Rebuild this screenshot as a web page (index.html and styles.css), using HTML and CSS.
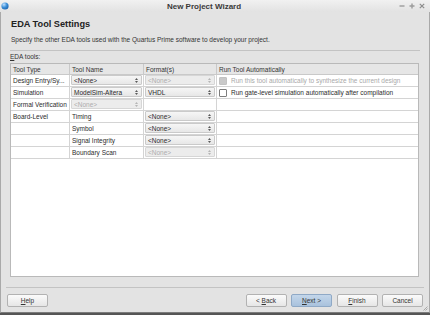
FILE: index.html
```html
<!DOCTYPE html>
<html lang="en">
<head>
    <meta charset="UTF-8">
    <title>New Project Wizard</title>
    <link rel="stylesheet" href="styles.css">
</head>
<body>
    <div class="window">
        <div class="titlebar">
            <svg class="app-icon" width="8" height="8" viewBox="0 0 8 8">
                <defs>
                    <radialGradient id="globe" cx="0.35" cy="0.3" r="0.8">
                        <stop offset="0" stop-color="#bfe0ff"/>
                        <stop offset="0.5" stop-color="#3b8fd8"/>
                        <stop offset="1" stop-color="#1b5ea8"/>
                    </radialGradient>
                </defs>
                <circle cx="4" cy="4" r="3.6" fill="url(#globe)"/>
            </svg>
            <span class="title">New Project Wizard</span>
            <span class="wm-buttons">
                <svg width="6" height="6" viewBox="0 0 6 6"><path d="M0.5 3H5.5" stroke="#9c9c9c" stroke-width="1.4"/></svg>
                <svg width="6" height="6" viewBox="0 0 6 6"><path d="M0.5 3H5.5M3 0.5V5.5" stroke="#9c9c9c" stroke-width="1.4"/></svg>
                <svg width="6" height="6" viewBox="0 0 6 6"><path d="M0.8 0.8L5.2 5.2M5.2 0.8L0.8 5.2" stroke="#8c8c8c" stroke-width="1.2"/></svg>
            </span>
        </div>

        <div class="page-head">
            <h1>EDA Tool Settings</h1>
            <p>Specify the other EDA tools used with the Quartus Prime software to develop your project.</p>
        </div>
        <div class="rule"></div>

        <div class="content">
            <div class="caption"><u>E</u>DA tools:</div>
            <div class="grid-frame">
                <div class="tools">
                    <div class="head">Tool Type</div>
                    <div class="head">Tool Name</div>
                    <div class="head">Format(s)</div>
                    <div class="head last">Run Tool Automatically</div>

                    <div class="cell">Design Entry/Sy...</div>
                    <div class="cell combo-cell">
                        <div class="combo"><span>&lt;None&gt;</span><svg class="spin" width="3" height="7" viewBox="0 0 3 7"><path d="M0 3L1.5 1L3 3Z M0 4L1.5 6L3 4Z"/></svg></div>
                    </div>
                    <div class="cell combo-cell">
                        <div class="combo disabled"><span>&lt;None&gt;</span><svg class="spin" width="3" height="7" viewBox="0 0 3 7"><path d="M0 3L1.5 1L3 3Z M0 4L1.5 6L3 4Z"/></svg></div>
                    </div>
                    <div class="cell last check-cell disabled-text"><span class="check disabled"></span>Run this tool automatically to synthesize the current design</div>

                    <div class="cell">Simulation</div>
                    <div class="cell combo-cell">
                        <div class="combo"><span>ModelSim-Altera</span><svg class="spin" width="3" height="7" viewBox="0 0 3 7"><path d="M0 3L1.5 1L3 3Z M0 4L1.5 6L3 4Z"/></svg></div>
                    </div>
                    <div class="cell combo-cell">
                        <div class="combo"><span>VHDL</span><svg class="spin" width="3" height="7" viewBox="0 0 3 7"><path d="M0 3L1.5 1L3 3Z M0 4L1.5 6L3 4Z"/></svg></div>
                    </div>
                    <div class="cell last check-cell"><span class="check"></span>Run gate-level simulation automatically after compilation</div>

                    <div class="cell">Formal Verification</div>
                    <div class="cell combo-cell">
                        <div class="combo disabled"><span>&lt;None&gt;</span><svg class="spin" width="3" height="7" viewBox="0 0 3 7"><path d="M0 3L1.5 1L3 3Z M0 4L1.5 6L3 4Z"/></svg></div>
                    </div>
                    <div class="cell"></div>
                    <div class="cell last"></div>

                    <div class="cell">Board-Level</div>
                    <div class="cell">Timing</div>
                    <div class="cell combo-cell">
                        <div class="combo"><span>&lt;None&gt;</span><svg class="spin" width="3" height="7" viewBox="0 0 3 7"><path d="M0 3L1.5 1L3 3Z M0 4L1.5 6L3 4Z"/></svg></div>
                    </div>
                    <div class="cell last"></div>

                    <div class="cell"></div>
                    <div class="cell">Symbol</div>
                    <div class="cell combo-cell">
                        <div class="combo"><span>&lt;None&gt;</span><svg class="spin" width="3" height="7" viewBox="0 0 3 7"><path d="M0 3L1.5 1L3 3Z M0 4L1.5 6L3 4Z"/></svg></div>
                    </div>
                    <div class="cell last"></div>

                    <div class="cell"></div>
                    <div class="cell">Signal Integrity</div>
                    <div class="cell combo-cell">
                        <div class="combo"><span>&lt;None&gt;</span><svg class="spin" width="3" height="7" viewBox="0 0 3 7"><path d="M0 3L1.5 1L3 3Z M0 4L1.5 6L3 4Z"/></svg></div>
                    </div>
                    <div class="cell last"></div>

                    <div class="cell"></div>
                    <div class="cell">Boundary Scan</div>
                    <div class="cell combo-cell">
                        <div class="combo disabled"><span>&lt;None&gt;</span><svg class="spin" width="3" height="7" viewBox="0 0 3 7"><path d="M0 3L1.5 1L3 3Z M0 4L1.5 6L3 4Z"/></svg></div>
                    </div>
                    <div class="cell last"></div>
                </div>
            </div>
        </div>

        <div class="rule wide"></div>
        <div class="buttons">
            <button class="btn"><u>H</u>elp</button>
            <span class="spacer"></span>
            <button class="btn">&lt; <u>B</u>ack</button>
            <button class="btn default"><u>N</u>ext &gt;</button>
            <button class="btn"><u>F</u>inish</button>
            <button class="btn">Cancel</button>
        </div>
        <svg class="grip" width="5" height="5" viewBox="0 0 5 5">
            <path d="M4.5 0.5L0.5 4.5M4.5 2.5L2.5 4.5" stroke="#9a9a9a" stroke-width="0.8"/>
        </svg>
    </div>
</body>
</html>
```

FILE: styles.css
```css
body {
    margin: 0;
    background-color: #555;
    font-family: 'Liberation Sans', Arial, sans-serif;
    color: #2c2c2c;
}

.window {
    position: relative;
    width: 430px;
    height: 313px;
    box-sizing: border-box;
    display: flex;
    flex-direction: column;
    background-color: #e3e3e3;
    border-left: 1px solid #a9a9a9;
    border-right: 1px solid #a9a9a9;
    border-bottom: 1px solid #7c7c7c;
}

/* window manager title */
.titlebar {
    height: 12px;
    display: flex;
    align-items: center;
    background: linear-gradient(#f1f1f1, #e2e2e2);
    margin: 0 -1px;
    padding: 0 0 0 1px;
}

.app-icon {
    flex: none;
}

.title {
    flex: 1;
    text-align: center;
    font-size: 8px;
    font-weight: bold;
    color: #3a3a3a;
}

.wm-buttons {
    display: flex;
    align-items: center;
    gap: 4px;
    padding-right: 5px;
}

/* page header */
.page-head {
    padding: 7px 10px 0;
}

h1 {
    margin: 0;
    font-size: 9.2px;
    line-height: 11px;
    color: #222;
}

.page-head p {
    margin: 6px 0 0;
    font-size: 6.5px;
    line-height: 8px;
    color: #333;
}

.rule {
    height: 1px;
    margin: 6px 9px 0;
    background-color: #c3c3c3;
    flex: none;
}

.rule.wide {
    margin: 0 5px;
}

/* table area */
.content {
    flex: 1;
    display: flex;
    flex-direction: column;
    padding: 2px 10px 10px 9px;
}

.caption {
    font-size: 6.5px;
    line-height: 8px;
    color: #333;
}

.grid-frame {
    flex: 1;
    margin-top: 2px;
    background-color: #fff;
    border: 1px solid #b9b9b9;
}

.tools {
    display: grid;
    grid-template-columns: 59px 74px 73px 1fr;
    grid-template-rows: 11px;
    grid-auto-rows: 12px;
    font-size: 6.5px;
}

.head,
.cell {
    box-sizing: border-box;
    display: flex;
    align-items: center;
    padding-left: 2px;
    border-right: 1px solid #d4d4d4;
    border-bottom: 1px solid #d4d4d4;
    white-space: nowrap;
    overflow: hidden;
}

.head {
    background-color: #e6e6e6;
    border-color: #c9c9c9;
    color: #333;
}

.head.last,
.cell.last {
    border-right: none;
}

.combo-cell {
    padding: 0 1px 1px 1px;
}

.combo {
    flex: 1;
    height: 10px;
    box-sizing: border-box;
    display: flex;
    align-items: center;
    justify-content: space-between;
    padding: 0 3px 0 2px;
    border: 1px solid #cacaca;
    border-radius: 1px;
    background: linear-gradient(#f6f6f6, #e7e7e7);
    color: #2a2a2a;
}

.combo.disabled {
    background: #ececec;
    border-color: #d6d6d6;
    color: #acacac;
}

.spin {
    fill: #5a5a5a;
}

.combo.disabled .spin {
    fill: #b5b5b5;
}

.check-cell {
    gap: 4px;
}

.check {
    width: 6px;
    height: 6px;
    border: 1px solid #7d7d7d;
    border-radius: 1px;
    background-color: #fff;
    flex: none;
}

.check.disabled {
    background-color: #c9c9c9;
    border-color: #c2c2c2;
}

.disabled-text {
    color: #a9a9a9;
}

/* dialog buttons */
.buttons {
    display: flex;
    gap: 4.5px;
    padding: 6px 6px 5px;
}

.spacer {
    flex: 1;
}

.btn {
    width: 41px;
    height: 13px;
    padding: 0;
    font-family: inherit;
    font-size: 6.5px;
    color: #333;
    border: 1px solid #b2b2b2;
    border-radius: 2px;
    background: linear-gradient(#fbfbfb, #e6e6e6);
}

.btn.default {
    background: linear-gradient(#c3d6ea, #a9c2dd);
    border-color: #8fa9c6;
}

.grip {
    position: absolute;
    right: 1px;
    bottom: 1px;
}
```
